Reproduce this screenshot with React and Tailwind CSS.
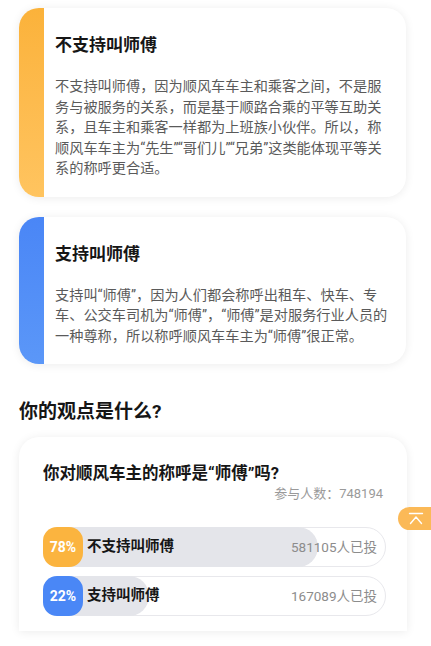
const FONT = { fontFamily: 'Roboto, "Noto Sans CJK SC", sans-serif' };

const cards = [
  {
    title: "不支持叫师傅",
    bar: "bg-linear-to-b from-[#fbb23a] to-[#ffc45f]",
    text: "不支持叫师傅，因为顺风车车主和乘客之间，不是服务与被服务的关系，而是基于顺路合乘的平等互助关系，且车主和乘客一样都为上班族小伙伴。所以，称顺风车车主为“先生”“哥们儿”“兄弟”这类能体现平等关系的称呼更合适。",
  },
  {
    title: "支持叫师傅",
    bar: "bg-linear-to-b from-[#4a86f6] to-[#5b97f8]",
    text: "支持叫“师傅”，因为人们都会称呼出租车、快车、专车、公交车司机为“师傅”，“师傅”是对服务行业人员的一种尊称，所以称呼顺风车车主为“师傅”很正常。",
  },
];

const options = [
  { label: "不支持叫师傅", pct: 78, votes: "581105", color: "bg-[#fbb43f]" },
  { label: "支持叫师傅", pct: 22, votes: "167089", color: "bg-[#4a87f6]" },
];

function OpinionCard({ title, bar, text }) {
  return (
    <div className="flex rounded-[20px] overflow-hidden bg-white shadow-[0_1px_10px_rgba(0,0,0,0.08)]">
      <div className={`w-[25px] shrink-0 ${bar}`} />
      <div className="flex-1 pl-[11px] pr-[12px] pt-[25px] pb-[18px]">
        <h2 className="text-[17px] leading-[24px] font-bold text-[#161616]">{title}</h2>
        <p className="mt-[19px] text-[14.2px] leading-[20.5px] text-[#5a5a5a]">{text}</p>
      </div>
    </div>
  );
}

function PollOption({ label, pct, votes, color }) {
  return (
    <div className="relative h-10 rounded-full border border-[#e8e8ec] bg-white">
      <div
        className="absolute -left-px -top-px -bottom-px rounded-full bg-[#e4e5ea]"
        style={{ width: `calc(40px + (100% - 40px) * ${pct / 100})` }}
      />
      <div className="relative flex items-center h-full">
        <div className={`-ml-px w-10 h-10 shrink-0 rounded-[14px] ${color} flex items-center justify-center text-white text-[14px] font-bold`}>
          {pct}%
        </div>
        <span className="ml-[4px] text-[14.5px] font-bold text-[#161616]">{label}</span>
        <span className="ml-auto pr-[8px] text-[13.5px] text-[#8c8c8c]">{votes}人已投</span>
      </div>
    </div>
  );
}

export default function App() {
  return (
    <div className="relative min-h-[646px] bg-white px-[19px] pt-[8px] overflow-hidden" style={FONT}>
      <div className="flex flex-col gap-[20px] pr-[6px]">
        {cards.map((c) => (
          <OpinionCard key={c.title} {...c} />
        ))}
      </div>

      <h1 className="mt-[35px] text-[19px] leading-[26px] font-bold text-[#161616]">你的观点是什么?</h1>

      <div className="mt-[12px] mr-[5px] rounded-t-[20px] bg-white shadow-[0_1px_10px_rgba(0,0,0,0.08)] pl-[24px] pr-[21px] pt-[26px] pb-[15px]">
        <h3 className="text-[16.5px] leading-[22px] font-bold text-[#161616]">你对顺风车主的称呼是“师傅”吗?</h3>
        <div className="pr-[3px] text-right text-[13px] leading-[18px] text-[#9a9a9a]">参与人数：748194</div>
        <div className="mt-[24px] flex flex-col gap-[9px]">
          {options.map((o) => (
            <PollOption key={o.label} {...o} />
          ))}
        </div>
      </div>

      <button className="absolute right-0 top-[507px] w-[33px] h-[23px] rounded-l-full bg-[#fbb957] flex items-center justify-center pl-[2px]">
        <svg width="16" height="14" viewBox="0 0 16 14" fill="none" stroke="white" strokeWidth="1.4" strokeLinecap="round" strokeLinejoin="round">
          <path d="M1.5 1.5h13" />
          <path d="M2.5 11.5 8 5l5.5 6.5" />
        </svg>
      </button>
    </div>
  );
}
